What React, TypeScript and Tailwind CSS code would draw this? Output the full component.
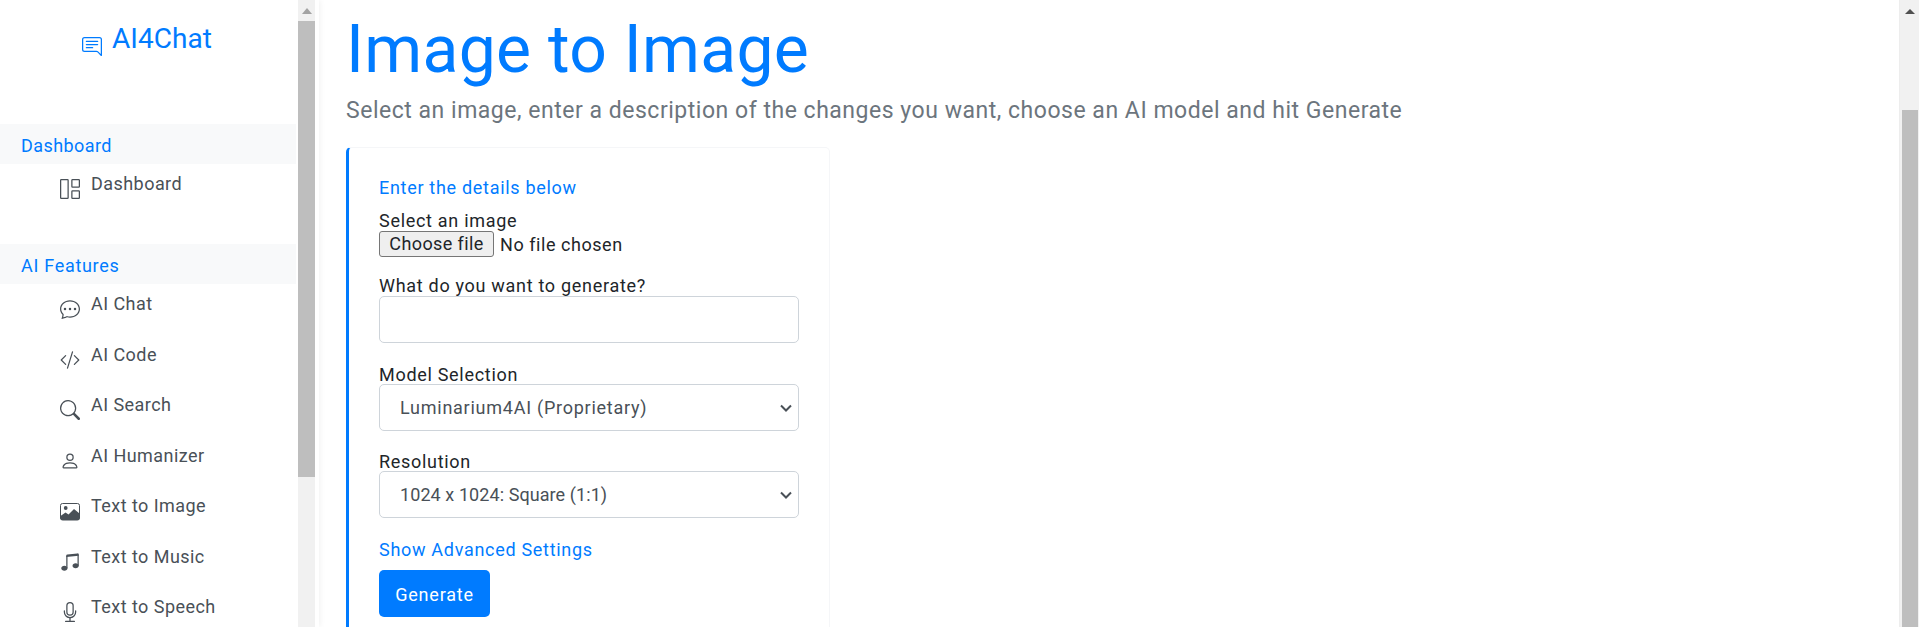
import React from "react";
import {
  BsChatRightText,
  BsGrid1X2,
  BsChatDots,
  BsCodeSlash,
  BsSearch,
  BsPerson,
  BsMusicNoteBeamed,
  BsMic,
} from "react-icons/bs";

function ImageIcon({ className }: { className?: string }) {
  return (
    <svg viewBox="0 0 20 20" className={className}>
      <rect x="0.5" y="2.5" width="19" height="16.5" rx="2" fill="none" stroke="currentColor" />
      <circle cx="5.7" cy="7" r="1.9" fill="currentColor" />
      <path d="M0.5 15L5.5 11.5L8.5 13.5L14 8L19.5 12.5V17.5Q19.5 19 18 19H2Q0.5 19 0.5 17.5Z" fill="currentColor" />
    </svg>
  );
}

const items = [
  ["AI Chat", BsChatDots],
  ["AI Code", BsCodeSlash],
  ["AI Search", BsSearch],
  ["AI Humanizer", BsPerson],
  ["Text to Image", ImageIcon],
  ["Text to Music", BsMusicNoteBeamed],
  ["Text to Speech", BsMic],
] as const;

function NavItem({ label, Icon, h }: { label: string; Icon: React.ComponentType<{ className?: string }>; h: string }) {
  return (
    <div className={`flex shrink-0 items-start pl-[60px] ${h}`}>
      <Icon className="mt-[15px] h-5 w-5 shrink-0 text-[#495057]" />
      <span className="ml-[11px] mt-[8px] text-[18px] leading-6 tracking-[0.45px] text-[#495057]">{label}</span>
    </div>
  );
}

function Band({ label, track }: { label: string; track: string }) {
  return (
    <div className={`flex h-10 shrink-0 items-center bg-[#f8f9fa] pl-[21px] pt-[2px] text-[18px] text-[#007bff] ${track}`}>{label}</div>
  );
}

function Select({ text, track }: { text: string; track: string }) {
  return (
    <div className="relative h-[47px] w-[420px]">
      <select className={`block h-full w-full appearance-none rounded-[5px] border border-[#ced4da] bg-white pl-5 text-[18px] text-[#495057] ${track}`}>
        <option>{text}</option>
      </select>
      <svg viewBox="0 0 12 8" className="pointer-events-none absolute right-[7px] top-[20px] h-2 w-3 text-[#495057]">
        <path d="M1 1.5L6 6.5L11 1.5" fill="none" stroke="currentColor" strokeWidth="2" />
      </svg>
    </div>
  );
}

const labelCls = "block h-5 text-[18px] leading-[20px] tracking-[0.7px] text-[#212529]";
const lowLabelCls = "block h-5 text-[18px] leading-[22px] tracking-[0.7px] text-[#212529]";

export default function App() {
  return (
    <div className="flex h-[627px] w-[1919px] overflow-hidden bg-white font-['Roboto',sans-serif]">
      <aside className="flex h-full w-[319px] shrink-0 shadow-[1px_0_6px_rgba(0,0,0,0.06)]">
        <div className="flex w-[296px] shrink-0 flex-col">
          <div className="flex h-[124px] shrink-0 items-start pl-[82px] pt-[21px] text-[#007bff]">
            <BsChatRightText className="mt-[16px] h-5 w-5" />
            <span className="ml-[10px] text-[28px] leading-[36px] tracking-[0.05px]">AI4Chat</span>
          </div>
          <Band label="Dashboard" track="tracking-[0.43px]" />
          <NavItem label="Dashboard" Icon={BsGrid1X2} h="h-20" />
          <Band label="AI Features" track="tracking-[0.7px]" />
          {items.map(([label, Icon]) => (
            <NavItem key={label} label={label} Icon={Icon} h="h-[50.5px]" />
          ))}
        </div>
        <div className="ml-[2px] flex w-[17px] shrink-0 flex-col bg-[#f1f1f1]">
          <div className="flex h-[21px] items-center justify-center">
            <div className="h-0 w-0 border-x-[5px] border-b-[6px] border-x-transparent border-b-[#a3a3a3]" />
          </div>
          <div className="h-[456px] bg-[#bebebe]" />
        </div>
      </aside>
      <main className="min-w-0 flex-1 pl-[27px] pt-[11px]">
        <h1 className="text-[66px] leading-[77px] tracking-[0.3px] text-[#007bff]">Image to Image</h1>
        <p className="mt-[10px] text-[23px] leading-[26px] tracking-[0.52px] text-[#6c757d]">
          Select an image, enter a description of the changes you want, choose an AI model and hit Generate
        </p>
        <section className="mt-[23px] h-[600px] w-[484px] rounded-[5px] border border-l-[3px] border-[#f5f6f8] border-l-[#007bff] pl-[30px] pr-[30px] pt-[27px]">
          <div className="text-[18px] leading-[26px] tracking-[0.7px] text-[#007bff]">Enter the details below</div>
          <label className={`mt-[10px] ${labelCls}`}>Select an image</label>
          <div className="flex h-[26px] items-center">
            <button className="h-[26px] w-[115px] rounded-[3px] border border-[#767676] bg-[#efefef] text-[18px] leading-none tracking-[0.4px] text-[#212529]">Choose file</button>
            <span className="ml-[6px] text-[18px] tracking-[0.55px] text-[#212529]">No file chosen</span>
          </div>
          <label className={`mt-[19px] ${labelCls}`}>What do you want to generate?</label>
          <input type="text" className="block h-[47px] w-[420px] rounded-[5px] border border-[#ced4da]" />
          <label className={`mt-[21px] ${lowLabelCls}`}>Model Selection</label>
          <Select text="Luminarium4AI (Proprietary)" track="tracking-[0.75px]" />
          <label className={`mt-[20px] ${lowLabelCls}`}>Resolution</label>
          <Select text="1024 x 1024: Square (1:1)" track="tracking-[0.08px]" />
          <div className="mt-[20px] text-[18px] leading-[24px] tracking-[0.7px] text-[#007bff]">Show Advanced Settings</div>
          <button className="mt-[8px] h-[47px] w-[111px] rounded-[5px] bg-[#007bff] pt-px text-[18px] tracking-[0.8px] text-white">Generate</button>
        </section>
      </main>
      <div className="flex w-5 shrink-0 flex-col border-l border-[#ededed] bg-[#f1f1f1] pl-[2px] pr-px">
        <div className="flex h-[110px] items-start justify-center pt-[9px]">
          <div className="h-0 w-0 border-x-[5px] border-b-[5px] border-x-transparent border-b-[#505050]" />
        </div>
        <div className="flex-1 bg-[#bebebe]" />
      </div>
    </div>
  );
}
